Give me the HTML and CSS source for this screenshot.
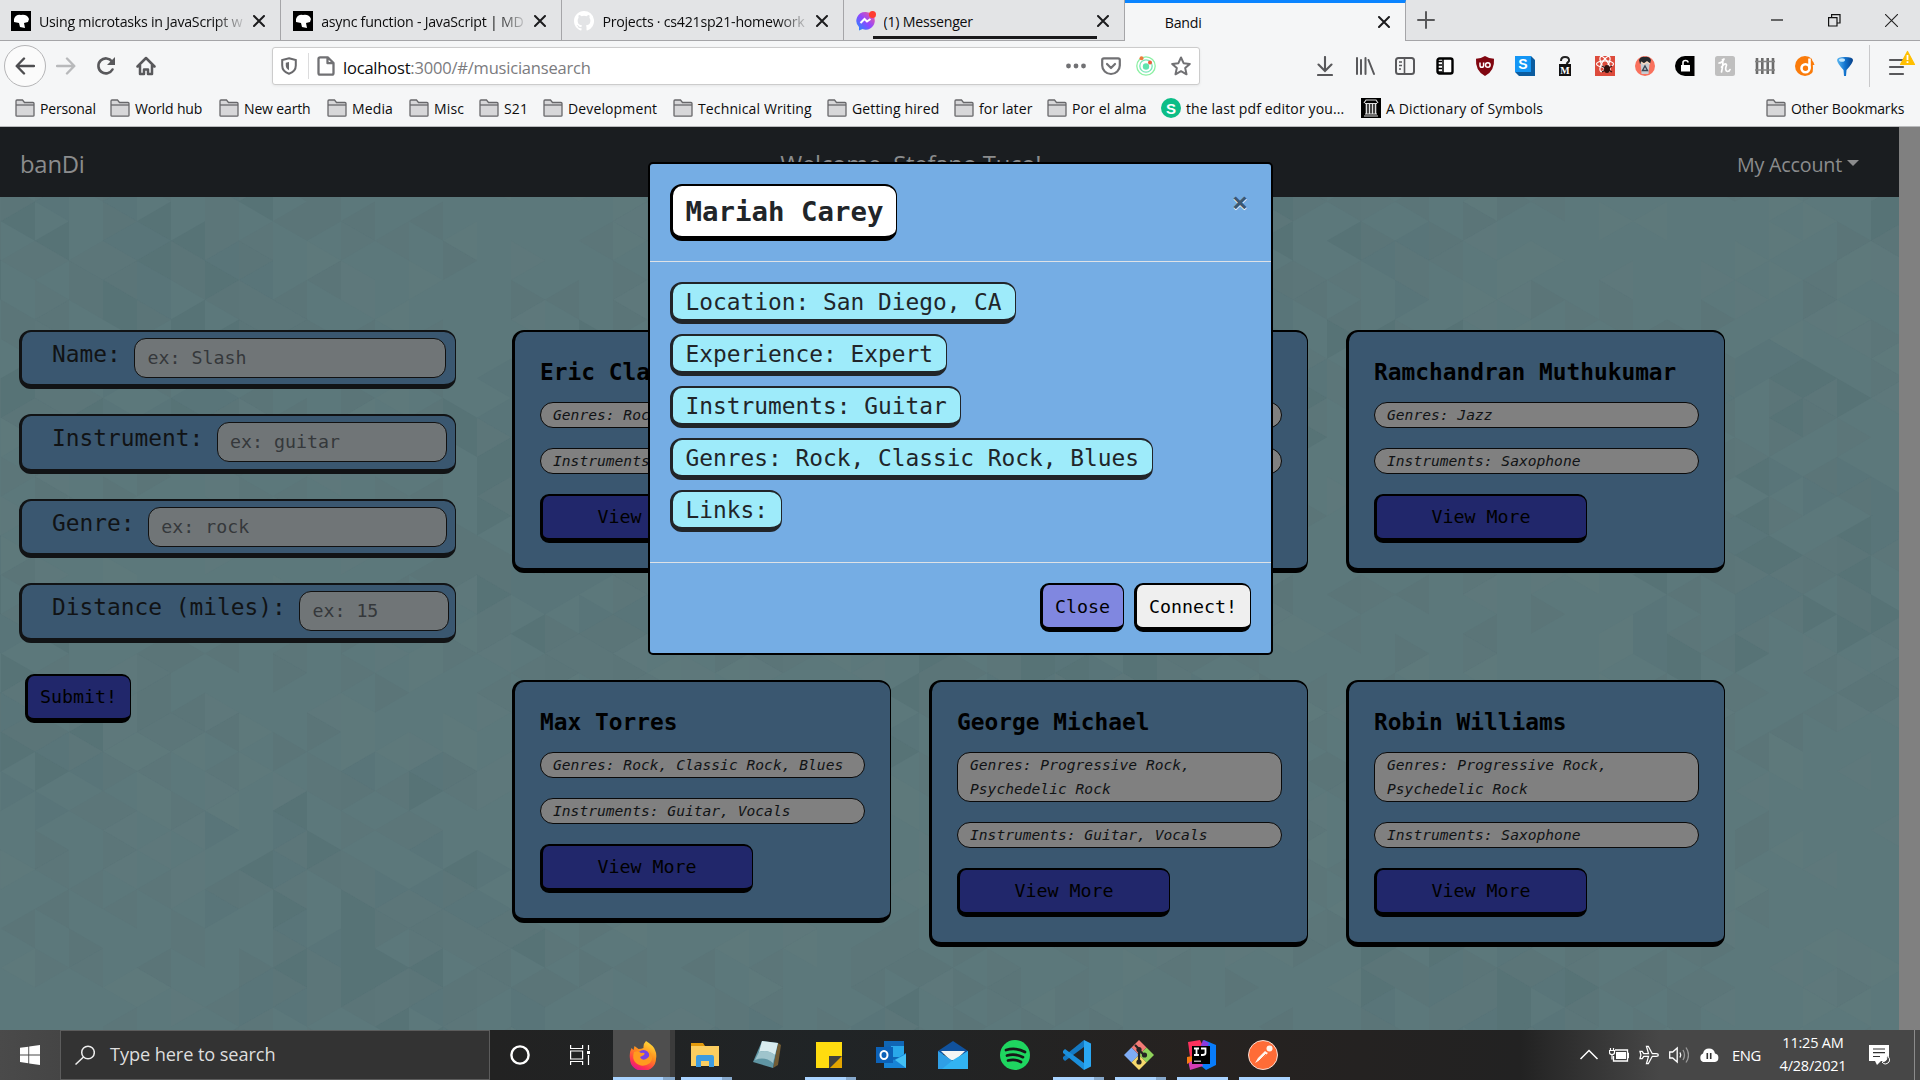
FILE: index.html
```html
<!DOCTYPE html>
<html lang="en">
<head>
<meta charset="utf-8">
<title>Bandi</title>
<link rel="stylesheet" href="styles.css">
</head>
<body>
<svg class="defs" width="0" height="0">
  <symbol id="x" viewBox="0 0 12 12"><path d="M1 1l10 10M11 1L1 11" fill="none" stroke="#1c1c1e" stroke-width="2" stroke-linecap="round"/></symbol>
  <symbol id="folder" viewBox="0 0 20 18"><path d="M1 16.5V2q0-1 1-1h5.500l2 2.500h8.500q1 0 1 1v12q0 .7-1 .7H2q-1 0-1-.7z" fill="#d7d7d9" stroke="#68686b" stroke-width="1.300"/><path d="M1 6h18" stroke="#68686b" stroke-width="1.300"/></symbol>
  <symbol id="mdn" viewBox="0 0 20 20"><path d="M0 0h20v20H0z" fill="#000"/><path d="M3 8Q5 3 10 4q6-1 8 4l-1 3-4 1 1 5-5-1-1-4-5-1z" fill="#fff"/></symbol>
</svg>

<header class="tabs">
  <div class="tab"><svg class="fav"><use href="#mdn"/></svg><span class="tab-title fade">Using microtasks in JavaScript w</span><svg class="tab-x"><use href="#x"/></svg></div>
  <div class="tab"><svg class="fav"><use href="#mdn"/></svg><span class="tab-title fade">async function - JavaScript | MD</span><svg class="tab-x"><use href="#x"/></svg></div>
  <div class="tab"><svg class="fav" viewBox="0 0 16 16"><path fill="#fff" d="M8 0C3.580 0 0 3.580 0 8c0 3.540 2.290 6.530 5.470 7.590.4.070.550-.170.550-.380v-1.490c-2.230.480-2.700-.950-2.700-.950-.360-.920-.890-1.170-.890-1.170-.730-.500.060-.490.060-.490.800.060 1.230.830 1.230.830.720 1.220 1.870.870 2.330.660.070-.520.280-.870.510-1.070-1.780-.200-3.640-.890-3.640-3.950 0-.870.310-1.590.820-2.150-.080-.200-.360-1.020.080-2.120 0 0 .670-.210 2.200.820a7.600 7.600 0 0 1 4 0c1.530-1.040 2.200-.820 2.200-.820.440 1.100.160 1.920.080 2.120.510.560.820 1.270.820 2.150 0 3.070-1.870 3.750-3.650 3.950.290.250.540.730.540 1.480v2.200c0 .210.150.460.550.380A8 8 0 0 0 8 0z"/></svg><span class="tab-title fade">Projects · cs421sp21-homework</span><svg class="tab-x"><use href="#x"/></svg></div>
  <div class="tab playing"><svg class="fav" viewBox="0 0 20 20"><defs><linearGradient id="ms" x1="0" y1="1" x2="1" y2="0"><stop offset="0" stop-color="#1591ff"/><stop offset=".5" stop-color="#9146ff"/><stop offset="1" stop-color="#ff5f8a"/></linearGradient></defs><path d="M9.500 1a9 8.800 0 1 1-3 17L3 19.500V16A9 8.800 0 0 1 9.500 1z" fill="url(#ms)"/><path d="M4.500 12l4-4 2.500 2.500L14.500 8" fill="none" stroke="#fff" stroke-width="2"/><circle cx="16.500" cy="3.500" r="3.500" fill="#ff3b30"/></svg><span class="tab-title">(1) Messenger</span><svg class="tab-x"><use href="#x"/></svg></div>
  <div class="tab active"><span class="fav"></span><span class="tab-title">Bandi</span><svg class="tab-x"><use href="#x"/></svg></div>
  <svg class="plus" viewBox="0 0 18 18"><path d="M9 1v16M1 9h16" stroke="#58585a" stroke-width="2" stroke-linecap="round"/></svg>
  <div class="win">
    <svg viewBox="0 0 13 13"><path d="M0 6h12" stroke="#111" stroke-width="1.200"/></svg>
    <svg viewBox="0 0 13 13"><path d="M.6 3.600h8.400v8.400H.6zM3.600 3.600v-3h8.400v8.400H9" fill="none" stroke="#111" stroke-width="1.200"/></svg>
    <svg viewBox="0 0 13 13"><path d="M0 0l13 13M13 0L0 13" stroke="#222" stroke-width="1.100"/></svg>
  </div>
</header>

<nav class="toolbar">
  <div class="nav-buttons">
    <span class="back"><svg viewBox="0 0 20 20"><path d="M19 10H2M9 2.500L1.700 10 9 17.500" fill="none" stroke="#4e4e51" stroke-width="2.400" stroke-linecap="round" stroke-linejoin="round"/></svg></span>
    <svg viewBox="0 0 20 20"><path d="M1 10h17M11 2.500l7.300 7.500-7.300 7.500" fill="none" stroke="#b8b9bb" stroke-width="2.400" stroke-linecap="round" stroke-linejoin="round"/></svg>
    <svg viewBox="0 0 20 20"><path d="M16.500 13.500A7.500 7.500 0 1 1 16 5.500" fill="none" stroke="#58585b" stroke-width="2.600" stroke-linecap="round"/><path d="M19 1v8h-8z" fill="#58585b"/></svg>
    <svg viewBox="0 0 20 20"><path d="M1.500 10.500L10 2l8.500 8.500M4 9v9h4v-4.500h4V18h4V9" fill="none" stroke="#58585b" stroke-width="2.500" stroke-linecap="round" stroke-linejoin="round"/></svg>
  </div>
  <div class="urlbar">
    <svg class="shield" viewBox="0 0 16 18"><path d="M8 1.200L14.800 3v5.500c0 4-3 7-6.800 8.300C4.200 15.500 1.200 12.500 1.200 8.500V3z" fill="none" stroke="#69696c" stroke-width="2"/><path d="M8 5v8.200C6 12 4.800 10.500 4.800 8.500V5.700z" fill="#69696c"/></svg>
    <span class="url-sep"></span>
    <svg class="doc" viewBox="0 0 18 20"><path d="M1.500 3q0-1.700 1.700-1.700h7.500L16.500 7v10q0 1.700-1.700 1.700H3.200q-1.700 0-1.700-1.700zM10.500 1.500v5.700h6" fill="none" stroke="#717174" stroke-width="2.300" stroke-linejoin="round"/></svg>
    <span class="url"><b>localhost</b>:3000/#/musiciansearch</span>
    <svg class="act" viewBox="0 0 20 20"><g fill="#717174"><circle cx="2.500" cy="10" r="2.400"/><circle cx="10" cy="10" r="2.400"/><circle cx="17.500" cy="10" r="2.400"/></g></svg>
    <svg class="act" viewBox="0 0 20 20"><path d="M1.200 4q0-1.700 1.700-1.700h14.200q1.700 0 1.700 1.700v5.500a8.800 8.500 0 0 1-17.600 0z" fill="none" stroke="#717174" stroke-width="2.200"/><path d="M6 8l4 4 4-4" fill="none" stroke="#717174" stroke-width="2.200" stroke-linecap="round" stroke-linejoin="round"/></svg>
    <svg class="act" viewBox="0 0 20 20"><g fill="none" stroke-width="1.300"><circle cx="10" cy="10" r="9.200" stroke="#8df0a4"/><circle cx="10" cy="10" r="6.200" stroke="#79e6b8"/></g><circle cx="10" cy="10.500" r="3.200" fill="#5fe3ae"/><circle cx="5.500" cy="2.300" r="2" fill="#ee7b3c"/><circle cx="14" cy="6.500" r="2" fill="#ee5a3c"/></svg>
    <svg class="act" viewBox="0 0 20 20"><path d="M10 1.500l2.600 5.700 6.200.7-4.600 4.200 1.300 6.200L10 15.200l-5.500 3.100 1.300-6.200L1.200 7.900l6.200-.7z" fill="none" stroke="#717174" stroke-width="2" stroke-linejoin="round"/></svg>
  </div>
  <div class="exts">
    <svg viewBox="0 0 20 20"><path d="M10 1v13M3.500 8.500L10 15l6.500-6.500M3 19h14" fill="none" stroke="#58585b" stroke-width="2.100" stroke-linecap="round"/></svg>
    <svg viewBox="0 0 20 20"><path d="M2 2v16M6 4v14M10.500 2v16M13.500 4L19 18" fill="none" stroke="#58585b" stroke-width="2" stroke-linecap="round"/></svg>
    <svg viewBox="0 0 20 20"><rect x="1" y="2" width="18" height="16" rx="2.500" fill="none" stroke="#58585b" stroke-width="2"/><path d="M9.500 2v16M4 6h3M4 9.500h3M4 13h2" stroke="#58585b" stroke-width="1.600"/></svg>
    <svg viewBox="0 0 20 20"><rect x="2.500" y="2.500" width="15" height="15" rx="2" fill="#fff" stroke="#000" stroke-width="2.400"/><path d="M8 2v16M3 5.500h4M3 9h4M3 12.500h4M3 16h4" stroke="#000" stroke-width="1.500"/></svg>
    <svg viewBox="0 0 20 20"><path d="M10 0q4 2.700 9 2.700 1 12-9 17.300Q0 14.700 1 2.700 6 2.700 10 0z" fill="#800610"/><path d="M5 6.500v3q0 1.800 1.800 1.800t1.800-1.800v-3" fill="none" stroke="#fff" stroke-width="1.500"/><circle cx="12.800" cy="9" r="2.300" fill="none" stroke="#fff" stroke-width="1.500"/></svg>
    <svg viewBox="0 0 20 20"><path d="M0 0h16l4 4v16H4l-4-4z" fill="#0b5c9f"/><path d="M0 0h16v16H0z" fill="#1496f5"/><text x="8" y="13" class="glyph" font-size="14" fill="#fff">S</text></svg>
    <svg viewBox="0 0 20 20"><path d="M6 5q0-4 4-4 4.500 0 4 4l-2.500 3" fill="none" stroke="#222" stroke-width="2"/><path d="M4 8h12v12H4z" fill="#111"/><text x="10" y="18" class="serif" font-size="10" fill="#fff">M</text></svg>
    <svg viewBox="0 0 20 20"><path d="M0 0h20v20H0z" fill="#dd4b3c"/><g fill="none" stroke="#fff" stroke-width="1.200"><ellipse cx="10" cy="8" rx="8.500" ry="3.200"/><ellipse cx="10" cy="8" rx="8.500" ry="3.200" transform="rotate(60 10 8)"/><ellipse cx="10" cy="8" rx="8.500" ry="3.200" transform="rotate(120 10 8)"/></g><ellipse cx="12" cy="13" rx="3" ry="4" fill="#33110e"/><path d="M7 10l10 6M17 10L7 16" stroke="#33110e" stroke-width="1.200"/></svg>
    <svg viewBox="0 0 20 20"><circle cx="10" cy="10" r="10" fill="#f9715d"/><path d="M4 4q2-4 6-3 4-1 6 3l-1 4H5z" fill="#25282c"/><path d="M5.500 7h9l-1 11h-7z" fill="#c6ccd2"/><path d="M6 6l3 2 3-2 3 2" stroke="#f6d7c0" stroke-width="1.500" fill="none"/><path d="M10 10l2.500 4.500h-5z" fill="none" stroke="#3b4754" stroke-width="1.400"/></svg>
    <svg viewBox="0 0 20 20"><path d="M10 0h9.500v20H10A10 10 0 0 1 10 0z" fill="#000"/><path d="M6 9h9v6.500H6z" fill="#fff"/><path d="M8 9V6.500q0-2 2.500-2t2.500 2" fill="none" stroke="#fff" stroke-width="1.600"/></svg>
    <svg viewBox="0 0 20 20"><rect width="20" height="20" rx="2.500" fill="#bfbfbf"/><path d="M7.500 3.500q1 4-1 12.500M6.500 11q4-5 5-2-2 6 1 6.500 2 0 2.500-2M4 7q3 0 5-4" fill="none" stroke="#fff" stroke-width="1.700" stroke-linecap="round"/></svg>
    <svg viewBox="0 0 20 20"><path d="M2 2v16M7.300 2v16M12.700 2v16M18 2v16" stroke="#6b6b6b" stroke-width="2.600"/><path d="M0 5.500h20M0 14h20" stroke="#858585" stroke-width="1.500"/></svg>
    <svg viewBox="0 0 20 20"><circle cx="10" cy="10" r="10" fill="#fa7b0a"/><path d="M14.500 2.500v10" stroke="#fff" stroke-width="2.600"/><circle cx="10.500" cy="12.200" r="4" fill="none" stroke="#fff" stroke-width="2.600"/><path d="M16.500 0H20v20h-3.500q3-6 0-20z" fill="#f5f6f7"/><path d="M16 4q3 1.500 3.500 5L16 9z" fill="#fa7b0a"/></svg>
    <svg viewBox="0 0 20 20"><defs><linearGradient id="bl"><stop offset="0" stop-color="#5bb8f2"/><stop offset=".5" stop-color="#1274cf"/><stop offset="1" stop-color="#063f88"/></linearGradient></defs><path d="M2 4q0-3 8-3t8 3q0 3-6.500 10l-.5 6h-2l-.5-6Q2 7 2 4z" fill="url(#bl)"/><ellipse cx="7" cy="4" rx="3" ry="1.800" fill="#c5e7fc"/></svg>
  </div>
  <div class="menu"><svg viewBox="0 0 27 26"><path d="M2 10h13M2 17h13M2 24h13" stroke="#58585b" stroke-width="2.200" stroke-linecap="round"/><path d="M19.500 1.500l7 13H12.500z" fill="#ffbf00" stroke="#ffbf00" stroke-width="1.200" stroke-linejoin="round"/><path d="M19.500 5v5M19.500 11.300v1.700" stroke="#fff" stroke-width="1.800"/></svg></div>
</nav>

<nav class="bookmarks">
  <span><svg><use href="#folder"/></svg>Personal</span>
  <span><svg><use href="#folder"/></svg>World hub</span>
  <span><svg><use href="#folder"/></svg>New earth</span>
  <span class="wide"><svg><use href="#folder"/></svg>Media</span>
  <span class="wide"><svg><use href="#folder"/></svg>Misc</span>
  <span class="wide"><svg><use href="#folder"/></svg>S21</span>
  <span class="wide"><svg><use href="#folder"/></svg>Development</span>
  <span class="wide"><svg><use href="#folder"/></svg>Technical Writing</span>
  <span class="wide"><svg><use href="#folder"/></svg>Getting hired</span>
  <span class="wide"><svg><use href="#folder"/></svg>for later</span>
  <span class="wide"><svg><use href="#folder"/></svg>Por el alma</span>
  <span class="wide"><svg class="sq" viewBox="0 0 20 20"><circle cx="10" cy="10" r="10" fill="#0bbd87"/><text x="10" y="15.500" class="glyph" font-size="15" fill="#fff">S</text></svg>the last pdf editor you...</span>
  <span class="wide"><svg class="sq" viewBox="0 0 20 20"><path d="M0 0h20v20H0z" fill="#000"/><path d="M3 5l2-3h10l2 3M3 18h14M4 16h12M4 5.500h12" fill="none" stroke="#ddd" stroke-width="1.200"/><path d="M5.500 6v10M8.500 6v10M11.500 6v10M14.500 6v10" stroke="#ddd" stroke-width="1.600"/></svg>A Dictionary of Symbols</span>
  <span><svg><use href="#folder"/></svg>Other Bookmarks</span>
</nav>

<main class="page">
  <div class="app">
    <div class="navbar"><span class="brand">banDi</span><span class="welcome">Welcome, Stefano Tuco!</span><span class="account">My Account<i></i></span></div>
    <div class="content">
      <svg class="pattern" id="pattern" width="1899" height="833"></svg>
      <form class="filters">
        <label class="field">Name: <input placeholder="ex: Slash" style="width:312px"></label>
        <label class="field">Instrument: <input placeholder="ex: guitar" style="width:230px"></label>
        <label class="field">Genre: <input placeholder="ex: rock" style="width:299px"></label>
        <label class="field">Distance (miles): <input placeholder="ex: 15" style="width:150px"></label>
        <button type="button" class="btn navy submit">Submit!</button>
      </form>
      <div class="cards">
        <article class="card"><h2>Eric Clapton</h2><p>Genres: Rock, Blues</p><p>Instruments: Guitar</p><button class="btn navy more">View More</button></article>
        <article class="card"><h2>Mariah Carey</h2><p>Genres: Rock</p><p>Instruments: Guitar</p><button class="btn navy more">View More</button></article>
        <article class="card"><h2>Ramchandran Muthukumar</h2><p>Genres: Jazz</p><p>Instruments: Saxophone</p><button class="btn navy more">View More</button></article>
        <article class="card"><h2>Max Torres</h2><p>Genres: Rock, Classic Rock, Blues</p><p>Instruments: Guitar, Vocals</p><button class="btn navy more">View More</button></article>
        <article class="card"><h2>George Michael</h2><p>Genres: Progressive Rock, Psychedelic Rock</p><p>Instruments: Guitar, Vocals</p><button class="btn navy more">View More</button></article>
        <article class="card"><h2>Robin Williams</h2><p>Genres: Progressive Rock, Psychedelic Rock</p><p>Instruments: Saxophone</p><button class="btn navy more">View More</button></article>
      </div>
    </div>
  </div>
  <div class="scroll"></div>
  <section class="modal">
    <div class="modal-head"><h1>Mariah Carey</h1><span class="dismiss">×</span></div>
    <div class="modal-body">
      <span class="fact">Location: San Diego, CA</span>
      <span class="fact">Experience: Expert</span>
      <span class="fact">Instruments: Guitar</span>
      <span class="fact">Genres: Rock, Classic Rock, Blues</span>
      <span class="fact">Links:</span>
    </div>
    <div class="modal-foot"><button class="btn close">Close</button><button class="btn connect">Connect!</button></div>
  </section>
</main>

<footer class="taskbar">
  <div class="start"><svg width="20" height="20" viewBox="0 0 20 20"><path fill="#fff" d="M0 2.800L8.300 1.700v7.800H0zM9.200 1.500L20 0v9.500H9.200zM0 10.400h8.300v7.800L0 17.100zM9.200 10.400H20V20L9.200 18.400z"/></svg></div>
  <div class="search"><svg width="20" height="20" viewBox="0 0 20 20"><circle cx="13" cy="7.500" r="6.300" fill="none" stroke="#eee" stroke-width="1.500"/><path d="M8.500 12L.5 19.500" stroke="#eee" stroke-width="1.500"/></svg><span>Type here to search</span></div>
  <div class="sys"><svg width="20" height="20" viewBox="0 0 20 20"><circle cx="10" cy="10" r="8.600" fill="none" stroke="#fff" stroke-width="2.400"/></svg></div>
  <div class="sys"><svg width="20" height="20" viewBox="0 0 20 20"><path d="M.6 0v3.500h12V0M.6 20v-3.500h12V20M.6 6h12v8H.6zM18.500 0v5M18.500 10v10" fill="none" stroke="#fff" stroke-width="1.200"/><path d="M17 6h3v3h-3z" fill="#fff"/></svg></div>
  <div class="apps">
    <div class="appi on stack focus"><svg viewBox="0 0 30 30"><defs><linearGradient id="ff" x1=".8" y1="0" x2=".3" y2="1"><stop offset="0" stop-color="#ffe23c"/><stop offset=".45" stop-color="#ff8a1c"/><stop offset=".8" stop-color="#ff3250"/><stop offset="1" stop-color="#e01490"/></linearGradient></defs><path d="M18 1q8 5 9 9 2 4 1 9a13 12 0 0 1-26 0Q1 13 3.500 8l2 2 1-4 4 3q3 0 5-1Q15 4 18 1z" fill="url(#ff)"/><circle cx="15.500" cy="16" r="6" fill="#7542e5"/><path d="M6 12q4-2 7 1 5-1 3 2l-4 2q2 4 6 2 5-3 3-8 6 6 1 12-8 6-15-1-3-4-1-10z" fill="#ff9a1f"/></svg></div>
    <div class="appi on stack"><svg viewBox="0 0 30 30"><path d="M1 3h12l2 3H1z" fill="#e29a0c"/><path d="M1 6h28v20H1z" fill="#fbce60"/><path d="M6 27V17q0-2 2-2h14q2 0 2 2v10h-5v-6h-8v6z" fill="#3d9be0"/></svg></div>
    <div class="appi"><svg viewBox="0 0 30 30"><path d="M26 3l3 2-3 20-5 3z" fill="#725b33"/><path d="M10 1l16 2-5 25-20-6z" fill="#5f95a3"/><path d="M10 1l16 2-3 12q-9-6-16-3z" fill="#d9ecef"/><path d="M7 12q9-3 16 3l-2 8Q13 16 3 20z" fill="#9fc4cc"/></svg></div>
    <div class="appi on stack"><svg viewBox="0 0 30 30"><path d="M2 2h26v14L16 28H2z" fill="#ffdc0f"/><path d="M15 16h13v1L16 28h-1z" fill="#41403c"/><path d="M28 16v12H16z" fill="#e4a500"/></svg></div>
    <div class="appi"><svg viewBox="0 0 30 30"><path d="M8 1h20v24H8z" fill="#1066b5"/><path d="M15 6h13v11H15z" fill="#29a8ea"/><path d="M8 13l10 7 12-7v15H8z" fill="#1785d8"/><path d="M19 20l11-6v14z" fill="#43c0f4"/><path d="M0 7h17v16H0z" fill="#0c62b8"/><ellipse cx="8" cy="15" rx="3.500" ry="4" fill="none" stroke="#fff" stroke-width="2"/></svg></div>
    <div class="appi"><svg viewBox="0 0 30 30"><path d="M0 11L15 1l15 10v3H0z" fill="#10529e"/><path d="M3 11h24l-9 9h-6z" fill="#f4f4f4"/><path d="M0 11l15 10 15-10v18H0z" fill="#2f9fe6"/><path d="M15 20l15-9v18H4z" fill="#32b3f2"/></svg></div>
    <div class="appi"><svg viewBox="0 0 30 30"><circle cx="15" cy="15" r="15" fill="#1fd660"/><path d="M6 10q10-3 19 2M7 15.500q8-2.500 16 1.700M8 20.500q7-2 13 1.500" fill="none" stroke="#171717" stroke-width="2.700" stroke-linecap="round"/></svg></div>
    <div class="appi on stack"><svg viewBox="0 0 30 30"><path d="M22 0l7 3.500v23L22 30z" fill="#2aa7f2"/><path d="M22 7L3 21l-2-2v-2L22 0z" fill="#1479c2"/><path d="M22 23L3 9l-2 2v2l21 17z" fill="#1b8fdb"/></svg></div>
    <div class="appi on stack"><svg viewBox="0 0 30 30"><path d="M15 0l7.500 7.500L15 15 7.500 7.500z" fill="#f37b76"/><path d="M7.500 7.500L15 15l-7.500 7.500L0 15z" fill="#7fadf6"/><path d="M22.500 7.500L30 15l-7.500 7.500L15 15z" fill="#8fd25b"/><path d="M15 15l7.500 7.500L15 30l-7.500-7.500z" fill="#f6d96d"/><path d="M11 5l4 4v13M15 10l5 5" stroke="#242424" stroke-width="2.200" fill="none"/><circle cx="15" cy="9.500" r="2.600" fill="#242424"/><circle cx="20.500" cy="15" r="2.600" fill="#242424"/><circle cx="15" cy="22" r="2.600" fill="#242424"/></svg></div>
    <div class="appi on"><svg viewBox="0 0 30 30"><path d="M2 2l12-2 4 8-14 9z" fill="#fe315d"/><path d="M18 0l12 5v20l-10 5-6-5z" fill="#087cfa"/><path d="M17 0l6 3-3 8h-7z" fill="#8b3be0"/><path d="M2 20l12-3 3 9-13 4z" fill="#d33db4"/><path d="M1 17l5-1v5l-5 3z" fill="#f97a12"/><path d="M6 6h18v18H6z" fill="#000"/><path d="M8 8.500h5M10.500 8.500V15M8 15h5M15 8.500h4.500V13q0 2-3 2H15" fill="none" stroke="#fff" stroke-width="1.800"/><path d="M8 20.500h7v1.500H8z" fill="#aaa"/></svg></div>
    <div class="appi on"><svg viewBox="0 0 30 30"><circle cx="15" cy="15" r="14.500" fill="#ff6c37" stroke="#f6ded5" stroke-width="1"/><path d="M7 23l3-5 7-7 3 2-8 7z" fill="#fff3ec"/><circle cx="21.500" cy="8.500" r="3" fill="#fff3ec"/><path d="M18 14l-7 7" stroke="#ff6c37"/></svg></div>
  </div>
  <div class="tray">
    <svg width="20" height="20" viewBox="0 0 20 20"><path d="M1.500 14L10 5.500l8.500 8.500" fill="none" stroke="#fff" stroke-width="1.500"/></svg>
    <svg width="20" height="20" viewBox="0 0 20 20"><path d="M6 5h12.500v11h-14v-5M18.500 8.500h1v4h-1" fill="none" stroke="#fff" stroke-width="1.300"/><path d="M7 7h10v7H7z" fill="#fff"/><path d="M1.500 3v2M4.500 3v2M.5 5.500h5v2q0 2-2.500 2t-2.500-2zM3 9.500v5" fill="none" stroke="#fff" stroke-width="1.200"/></svg>
    <svg width="20" height="20" viewBox="0 0 20 20"><path d="M19.300 10q0 1.200-2 1.300h-4l-4 7.400H7.500l2-7.400H4.700l-1.500 2.400H1l.9-3.700L1 6.300h2.200l1.500 2.400h4.800l-2-7.400h1.800l4 7.400h4q2 .1 2 1.300z" fill="none" stroke="#fff" stroke-width="1.300"/></svg>
    <svg width="20" height="20" viewBox="0 0 20 20"><path d="M.7 7h3l4.500-4v14l-4.500-4h-3z" fill="none" stroke="#fff" stroke-width="1.300"/><path d="M11 7.500q1.500 2.500 0 5" fill="none" stroke="#fff" stroke-width="1.300"/><path d="M14 5q3 5 0 10M17 2.500q5 7.500 0 15" fill="none" stroke="#999" stroke-width="1.300"/></svg>
    <svg width="20" height="20" viewBox="0 0 20 20"><path d="M4 17a4 4.500 0 0 1 0-8.500Q5 3.500 10 3.500t6 5A4 4.300 0 0 1 16 17z" fill="#fff"/><path d="M8.300 8v6M11.700 8v6" stroke="#333" stroke-width="1.600"/></svg>
    <span class="lang">ENG</span>
    <span class="clock"><span>11:25 AM</span><span>4/28/2021</span></span>
    <svg class="note" width="22" height="22" viewBox="0 0 22 22"><path d="M0 1h20v16h-8l-4 4-2-4H0z" fill="#fff"/><path d="M4 5h12M4 8.700h12M4 12.500h7" stroke="#333" stroke-width="1.200"/><path d="M17 11q3 6-4 7 3 4 7 0 2-4-3-7z" fill="#444" stroke="#fff"/></svg>
    <i class="desk"></i>
  </div>
</footer>
<script src="pattern.js"></script>
</body>
</html>
```
FILE: styles.css
```css
* { box-sizing: border-box; }
body {
  margin: 0; width: 1920px; height: 1080px; overflow: hidden;
  display: flex; flex-direction: column;
  font-family: "Open Sans", "Noto Sans", sans-serif; color: #0c0c0d;
}
svg { display: block; flex: none; }
.defs { position: absolute; }
.glyph { font-family: "Liberation Sans", sans-serif; font-weight: 700; text-anchor: middle; }
.serif { font-family: "Liberation Serif", serif; font-weight: 700; text-anchor: middle; }

/* tab strip */
.tabs { height: 41px; flex: none; display: flex; background: #e3e4e6; border-bottom: 1px solid #a5a5a8; }
.tab {
  position: relative; width: 281.200px; height: 40px; padding: 2px 15px 0 12px; flex: none;
  display: flex; align-items: center; border-right: 1px solid #a5a5a8;
  font-size: 14.200px; letter-spacing: -0.250px; white-space: nowrap;
}
.tab:first-child { padding-left: 11px; }
.fav { width: 20px; height: 20px; margin-right: 8px; flex: none; }
.tab-title { flex: 1; overflow: hidden; }
.fade { -webkit-mask-image: linear-gradient(90deg, #000 84%, transparent); mask-image: linear-gradient(90deg, #000 84%, transparent); }
.tab-x { width: 12px; height: 12px; margin-left: 5px; }
.playing::after { content: ""; position: absolute; left: 29px; width: 224px; top: 36px; height: 3px; background: #19191b; }
.active { height: 41px; background: #f5f6f7; border-top: 3px solid #0a84ff; padding-top: 0; }
.plus { width: 18px; height: 18px; margin: 11px 0 0 11px; }
.win { margin: 14px 22px 0 auto; display: flex; gap: 44px; }
.win svg { width: 13px; height: 13px; }

/* navigation row */
.toolbar { height: 50px; flex: none; display: flex; align-items: center; background: #f5f6f7; padding-left: 4px; }
.nav-buttons { display: flex; align-items: center; gap: 20px; width: 268px; }
.nav-buttons svg { width: 20px; height: 20px; }
.back { width: 42px; height: 42px; margin-right: -10px; border: 1px solid #b5b5b7; border-radius: 50%; background: #fbfbfb; display: grid; place-items: center; }
.urlbar { width: 928px; height: 38px; border: 1px solid #ccc; border-radius: 3px; background: #fff; display: flex; align-items: center; padding: 0 8px; box-shadow: 0 1px 3px #0001; }
.shield { width: 16px; height: 18px; }
.url-sep { width: 1px; height: 26px; background: #dcdcdd; margin: 0 8px 0 11px; }
.doc { width: 18px; height: 20px; }
.url { flex: 1; margin-left: 8px; padding-top: 3px; font-size: 16.500px; letter-spacing: -0.200px; color: #7b7b7e; }
.url b { font-weight: 400; color: #0c0c0d; }
.act { width: 20px; height: 20px; margin-left: 15px; }
.exts { display: flex; gap: 20px; margin-left: 115px; }
.exts svg { width: 20px; height: 20px; }
.menu { height: 42px; margin-left: 14px; padding: 5px 0 0 17px; border-left: 1px solid #c9c9cb; }
.menu svg { width: 29px; height: 26px; }

/* bookmarks */
.bookmarks {
  height: 36px; flex: none; background: #f5f6f7; border-bottom: 1px solid #b9babc; padding: 0 0 0 15px;
  display: grid; align-items: center;
  grid-template-columns: 95px 109px 108px 82px 70px 64px 130px 154px 127px 93px 114px 200px 405px 150px;
  font-size: 14px; letter-spacing: -0.150px; white-space: nowrap;
}
.bookmarks span { display: flex; align-items: center; gap: 5px; }
.bookmarks .wide { letter-spacing: 0.130px; }
.bookmarks svg { width: 20px; height: 18px; margin-bottom: 1px; }
.bookmarks .sq { height: 20px; }

/* web page, dimmed behind the dialog */
.page { position: relative; height: 903px; flex: none; display: flex; }
.app { width: 1899px; display: flex; flex-direction: column; }
.scroll { width: 21px; background: #808080; }
.navbar { height: 70px; flex: none; background: #1a1d20; color: #8b8c8d; display: flex; align-items: center; justify-content: space-between; padding: 4px 40px 0 20px; }
.navbar span { font-size: 23.800px; letter-spacing: -0.200px; }
.navbar .account { font-size: 19.700px; }
.account i { display: inline-block; border: 6px solid transparent; border-top-color: #8b8c8d; border-bottom: 0; margin-left: 5px; vertical-align: 6px; }
.content { position: relative; flex: 1; display: flex; background: #5c787b; padding-top: 133px; overflow: hidden; }
.pattern { position: absolute; inset: 0; }
.filters, .cards { position: relative; }
.filters, .cards, .modal, .filters input, .btn { font-family: "DejaVu Sans Mono", monospace; }
.filters { width: 437px; margin-left: 19px; display: flex; flex-direction: column; align-items: flex-start; }
.field {
  width: 437px; height: 59.400px; margin-bottom: 25px; padding: 0 0 0 30px; white-space: pre;
  font-size: 22.840px; line-height: 44px; color: #111315; background: #3a5770;
  border: solid #111315; border-width: 2px 1px 5px 3px; border-radius: 12px; display: flex;
}
.field input {
  height: 40px; margin-top: 6px; padding: 0 12px 1px; border: 1px solid #111; border-radius: 12px;
  background: #707577; font-size: 18.270px; outline: 0;
}
.field input::placeholder { color: #35383b; opacity: 1; }
.btn {
  height: 49px; padding: 0 13px 0 12px; font-size: 18.270px; color: #000;
  border: solid #000; border-width: 2px 1px 5px 3px; border-radius: 9px; white-space: nowrap;
}
.navy { background: #21276b; }
.submit { margin: 6px 0 0 6px; width: 106px; }
.cards { margin-left: 56px; display: grid; grid-template-columns: repeat(3, 379px); grid-template-rows: 243px auto; gap: 107px 38px; align-items: start; align-content: start; }
.card {
  background: #3a5770; border: solid #000; border-width: 2px 1px 5px 3px; border-radius: 12px;
  padding: 25px 25px 25px; color: #000;
}
.card h2 { margin: 0 0 15px; font-size: 22.840px; line-height: 30px; white-space: nowrap; }
.card p {
  margin: 0 0 20px; padding: 0 12px; border: 1px solid #0a0a0a; border-radius: 13px; background: #808080;
  font-size: 14.620px; line-height: 24px; font-style: italic; color: #111315;
}
.more { display: block; width: 213px; padding-bottom: 2px; }

/* dialog */
.modal {
  position: absolute; left: 648px; top: 35px; width: 625px; height: 493px;
  background: #75ade4; border: 2px solid #000; border-radius: 5px; color: #212529;
  display: flex; flex-direction: column;
}
.modal-head { height: 98px; padding: 20px; display: flex; justify-content: space-between; border-bottom: 1px solid #dee2e6; }
.modal h1 {
  margin: 0; height: 57px; padding: 1px 12.500px 0; background: #fff; font-size: 27.400px; line-height: 50px;
  border: solid #000; border-width: 2px 1px 5px 3px; border-radius: 12px;
}
.dismiss { width: 22px; text-align: center; font: 700 29px/35px "Open Sans", sans-serif; color: #3b5772; text-shadow: 0 1px 0 #fff; }
.modal-body { flex: 1; padding: 20px; display: flex; flex-direction: column; align-items: flex-start; gap: 10.500px; }
.fact {
  height: 41.500px; padding: 0 13px 0 12.500px; background: #9eebfa; font-size: 22.840px; line-height: 37px;
  border: solid #212529; border-width: 2px 1px 5px 3px; border-radius: 12px;
}
.modal-foot { height: 91px; padding: 20px 20px; display: flex; justify-content: flex-end; gap: 10px; border-top: 1px solid #dee2e6; }
.close { background: #8087e0; width: 84px; }
.connect { background: #efefef; width: 117px; }

/* taskbar */
.taskbar { height: 50px; flex: none; display: flex; color: #fff; background: linear-gradient(90deg, #4a4a4a 0, #222 490px, #202426 830px, #262220 1200px, #222 1520px, #474747 1660px, #474747); }
.start { width: 60px; display: grid; place-items: center; }
.search { width: 430px; background: #333; border: 1px solid #5c5c5c; padding-left: 14px; display: flex; align-items: center; gap: 15px; font-size: 18.200px; letter-spacing: -0.100px; color: #dedede; }
.search span { padding-bottom: 2px; }
.sys { width: 60px; display: grid; place-items: center; }
.apps { display: flex; gap: 11px; margin-left: 3px; }
.appi { position: relative; width: 51px; height: 50px; padding: 10px 0 0 9px; }
.appi:first-child { width: 62px; margin-right: -5px; padding-left: 15px; }
.appi svg { width: 30px; height: 30px; }
.on::after { content: ""; position: absolute; left: 0; right: 0; bottom: 0; height: 3px; background: #a9d3ff; }
.stack::after { background: linear-gradient(90deg, #a9d3ff 80%, #86a8cb 80%); }
.focus { background: linear-gradient(90deg, #4e4e4e 57px, #3c3c3c 57px); }
.tray { margin-left: auto; display: flex; align-items: center; gap: 10px; }
.lang { width: 36px; margin-left: 3px; font-size: 14.800px; letter-spacing: -0.400px; }
.clock { width: 70px; display: flex; flex-direction: column; align-items: center; font-size: 14.500px; line-height: 23px; letter-spacing: -0.200px; margin-top: -2px; white-space: nowrap; }
.note { margin-left: 11px; }
.desk { width: 6px; height: 50px; border-left: 1px solid #8b8b8b; margin-left: 13px; }
```
FILE: pattern.js
```js
// Faceted backdrop: a lattice of vertical-edged triangles in a few close shades.
(function () {
  var W = 34, H = 39.3, shades = ['#526d72', '#567278', '#5a7175', '#5c7477', '#60797c', '#5f777b'];
  var paths = shades.map(function () { return ''; });
  function rnd(a, b) { var v = Math.sin(a * 127.1 + b * 311.7) * 43758.5453; return v - Math.floor(v); }
  for (var i = -1; i < 57; i++) {
    for (var j = -2; j < 46; j++) {
      var x = i * W + 1, y = j * H / 2 + 4.5, odd = (i + j) & 1;
      var patch = Math.sin(i * 0.37 + j * 0.11) + Math.cos(j * 0.23 - i * 0.19);
      var r = rnd(i + 3, j + 7);
      if (r > 0.5 + patch * 0.15) continue;
      var k = Math.min(5, Math.floor(rnd(j, i) * 4 + (patch > 0.3 ? 0 : 2)));
      paths[k] += odd
        ? 'M' + x + ' ' + y + 'v' + H + 'l' + W + ' ' + (-H / 2) + 'z'
        : 'M' + (x + W) + ' ' + y + 'v' + H + 'l' + (-W) + ' ' + (-H / 2) + 'z';
    }
  }
  document.getElementById('pattern').innerHTML = paths.map(function (d, k) {
    return '<path fill="' + shades[k] + '" opacity=".5" d="' + d + '"/>';
  }).join('');
})();
```
